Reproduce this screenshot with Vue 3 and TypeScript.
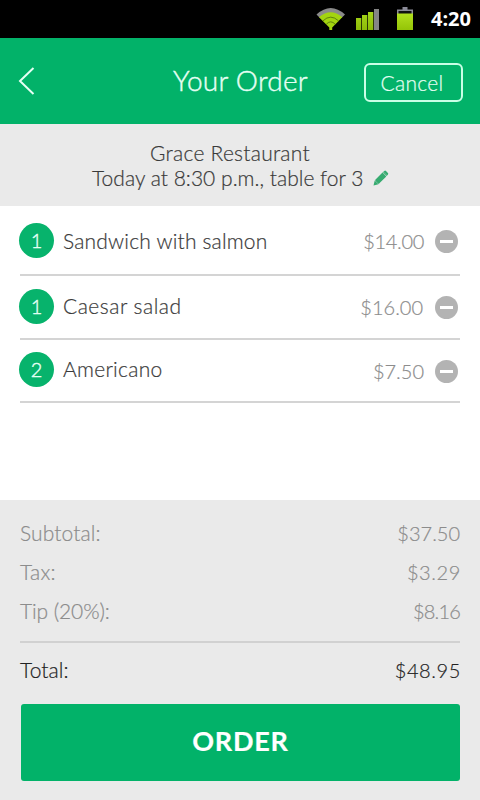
<script setup lang="ts">
interface Item { id: string; qty: number; name: string; price: string }
interface Line { id: string; label: string; amount: string }
const items: Item[] = [
  { id: 'sandwich', qty: 1, name: 'Sandwich with salmon', price: '$14.00' },
  { id: 'caesar', qty: 1, name: 'Caesar salad', price: '$16.00' },
  { id: 'americano', qty: 2, name: 'Americano', price: '$7.50' },
]
const lines: Line[] = [
  { id: 'subtotal', label: 'Subtotal:', amount: '$37.50' },
  { id: 'tax', label: 'Tax:', amount: '$3.29' },
  { id: 'tip', label: 'Tip (20%):', amount: '$8.16' },
  { id: 'total', label: 'Total:', amount: '$48.95' },
]
</script>

<template>
  <main class="screen">
    <div class="status">
      <svg class="wifi" viewBox="0 0 30 24" width="30" height="24">
        <path d="M.5 7.500Q14.700-5.500 29 7.500L25.500 11Q14.700 1.500 4 11Z" fill="#8a8a8a" />
        <path d="M3 10.300Q14.700.200 26.300 10.300L16.200 20.500V23H13.300V20.500Z" fill="#a3d40f" />
        <path d="M7 13.800Q14.700 6.500 22.500 13.800M10.300 17.200Q14.700 12.500 19.200 17.200" fill="none" stroke="#4d6b0c" stroke-width=".8" />
      </svg>
      <svg class="signal" viewBox="0 0 24 22" width="24" height="22">
        <defs>
          <linearGradient id="bar" x1="0" y1="0" x2="0" y2="1"><stop offset="0" stop-color="#a6d61a" /><stop offset="1" stop-color="#8dbb08" /></linearGradient>
        </defs>
        <path d="M0 9h5.300v12H0zM6 6h5.300v15H6zM12 3h5.300v18h-5.300z" fill="url(#bar)" />
        <path d="M18 0h5v21h-5z" fill="#858585" />
      </svg>
      <svg class="battery" viewBox="0 0 18 24" width="18" height="24">
        <defs>
          <linearGradient id="cell" x1="0" y1="0" x2="0" y2="1"><stop offset="0" stop-color="#b2e01e" /><stop offset="1" stop-color="#94c407" /></linearGradient>
        </defs>
        <path d="M6.500 0h5v2.500H17V8H1V2.500h5.500z" fill="#8b8b98" />
        <path d="M2.500 4h13v3h-13z" fill="#111" />
        <path d="M1 6.500h16V23H1z" fill="url(#cell)" />
      </svg>
      <span class="clock">4:20</span>
    </div>
    <header class="header">
      <svg class="back" viewBox="0 0 18 28" width="18" height="28"><path d="M15.500 1 2 14 15.500 27" fill="none" stroke="#e6fff4" stroke-width="2" /></svg>
      <h1 class="title">Your Order</h1>
      <button class="cancel">Cancel</button>
    </header>
    <section class="booking">
      <p class="place">Grace Restaurant</p>
      <p class="when">
        <span>Today at 8:30 p.m., table for 3</span>
        <svg class="pencil" viewBox="0 0 16 16" width="16" height="16"><path d="M.5 15.500 1.700 10.500 5.500 14.300ZM2.300 9.800 9.500 2.600 13.300 6.400 6.100 13.600ZM10.300 1.800 11.300.900Q12.200.200 13 1L14.900 2.900Q15.600 3.700 15 4.600L14.100 5.600Z" fill="#36ab70" /><path d="M2.600 10 6 13.400" stroke="#36ab70" stroke-width="1.500" /><path d="M10 2.200 13.700 5.900" stroke="#36ab70" stroke-width="1" /></svg>
      </p>
    </section>
    <ul class="items">
      <li v-for="i in items" :key="i.id" class="item" :class="i.id">
        <span class="qty">{{ i.qty }}</span>
        <span class="name">{{ i.name }}</span>
        <span class="price">{{ i.price }}</span>
        <span class="minus" />
      </li>
    </ul>
    <section class="summary">
      <div v-for="l in lines" :key="l.id" class="line" :class="l.id">
        <span class="label">{{ l.label }}</span>
        <span class="amount">{{ l.amount }}</span>
      </div>
      <button class="order">ORDER</button>
    </section>
  </main>
</template>

<style>
body { margin: 0; }
</style>
<style scoped>
.screen { width: 480px; height: 800px; display: flex; flex-direction: column; background: #fff; color: #3a3a3a; font: 300 20px/24px Lato, "Open Sans", sans-serif; -webkit-text-stroke: 0.2px; }
.status { height: 38px; background: #000; display: flex; align-items: center; justify-content: flex-end; box-sizing: border-box; padding-right: 9px; }
.wifi { margin-right: 10px; }
.signal { margin: 1px 16px 0 0; }
.battery { margin-right: 17px; }
.clock { color: #fff; font: 700 20px/24px "Open Sans", sans-serif; -webkit-text-stroke: 0; }
.header { height: 86px; background: #02b269; display: grid; grid-template-columns: 116px 1fr 116px; align-items: center; color: #e6fff4; }
.back { margin-left: 18px; }
.title { margin: 0; padding-bottom: 3px; padding-left: 1px; font-size: 28px; font-weight: 300; text-align: center; letter-spacing: 0.25px; -webkit-text-stroke: 0.4px; }
.cancel { box-sizing: border-box; width: 99px; height: 39px; margin-top: 3px; border: 2px solid #c9ffe6; border-radius: 6px; background: none; color: inherit; font: inherit; font-size: 21px; padding: 0 3px 0 0; letter-spacing: 0.3px; -webkit-text-stroke: 0.2px; }
.booking { height: 82px; box-sizing: border-box; background: #eaeaea; padding-top: 16px; font-size: 21px; }
.booking p { margin: 0; height: 25px; line-height: 25px; }
.place { padding-right: 20px; text-align: center; letter-spacing: 0.25px; }
.when { display: flex; padding-left: 92px; letter-spacing: 0.02px; }
.when span { width: 281px; white-space: nowrap; }
.pencil { margin-top: 5px; }
.items { list-style: none; margin: 0; padding: 0 20px 0 19px; height: 294px; }
.item { display: flex; align-items: center; box-sizing: border-box; height: 70px; padding-right: 2px; background: linear-gradient(#d4d4d4, #d4d4d4) 1px 100% / 100% 2px no-repeat; padding-bottom: 2px; }
.item.caesar { height: 64px; }
.item.americano { height: 63px; }
.qty { width: 35px; height: 35px; border-radius: 50%; background: #07b36c; color: #e6fff4; text-align: center; line-height: 35px; -webkit-text-stroke: 0.4px; }
.name { margin-left: 9px; flex: 1; font-size: 21px; }
.price { color: #8c8c8c; margin-right: 11px; }
.minus { width: 23px; height: 23px; border-radius: 50%; background: linear-gradient(#fff, #fff) center / 13px 3px no-repeat #b3b3b3; }
.sandwich .qty { margin-top: 1px; }
.sandwich .name { letter-spacing: 0.18px; margin-top: 1px; }
.sandwich .price { letter-spacing: -0.3px; margin-top: 1px; }
.sandwich .minus { margin-top: 3px; }
.caesar .qty { margin-bottom: 1px; }
.caesar .name { letter-spacing: 0.5px; margin-bottom: 3px; }
.caesar .price { margin-right: 12px; margin-bottom: 1px; }
.americano .qty { margin-bottom: 2px; }
.americano .name { letter-spacing: 0.28px; margin-bottom: 4px; }
.americano .minus { margin-top: 1px; }
.summary { height: 300px; box-sizing: border-box; background: #eaeaea; padding: 14px 20px 0; }
.line { display: flex; justify-content: space-between; height: 39px; line-height: 38px; color: #8c8c8c; }
.label { font-size: 21px; }
.subtotal .label { letter-spacing: 0.1px; }
.subtotal .amount { letter-spacing: 0; }
.tax .label { letter-spacing: 0.3px; }
.tax .amount { letter-spacing: 0.6px; margin-right: -1px; }
.tip .label { letter-spacing: -0.1px; }
.tip .amount { letter-spacing: -0.8px; }
.total { margin-top: 10px; border-top: 2px solid #d1d1d1; height: 61px; line-height: 54px; color: #222; }
.total .label { letter-spacing: 0.1px; }
.total .amount { letter-spacing: 0.6px; margin-right: -1px; }
.order { display: block; width: 439px; height: 77px; margin-left: 1px; border: 0; border-radius: 3px; background: #02b269; color: #fff; font: 700 27px/30px Lato, sans-serif; letter-spacing: 0.8px; padding: 0 0 3px; }
</style>
